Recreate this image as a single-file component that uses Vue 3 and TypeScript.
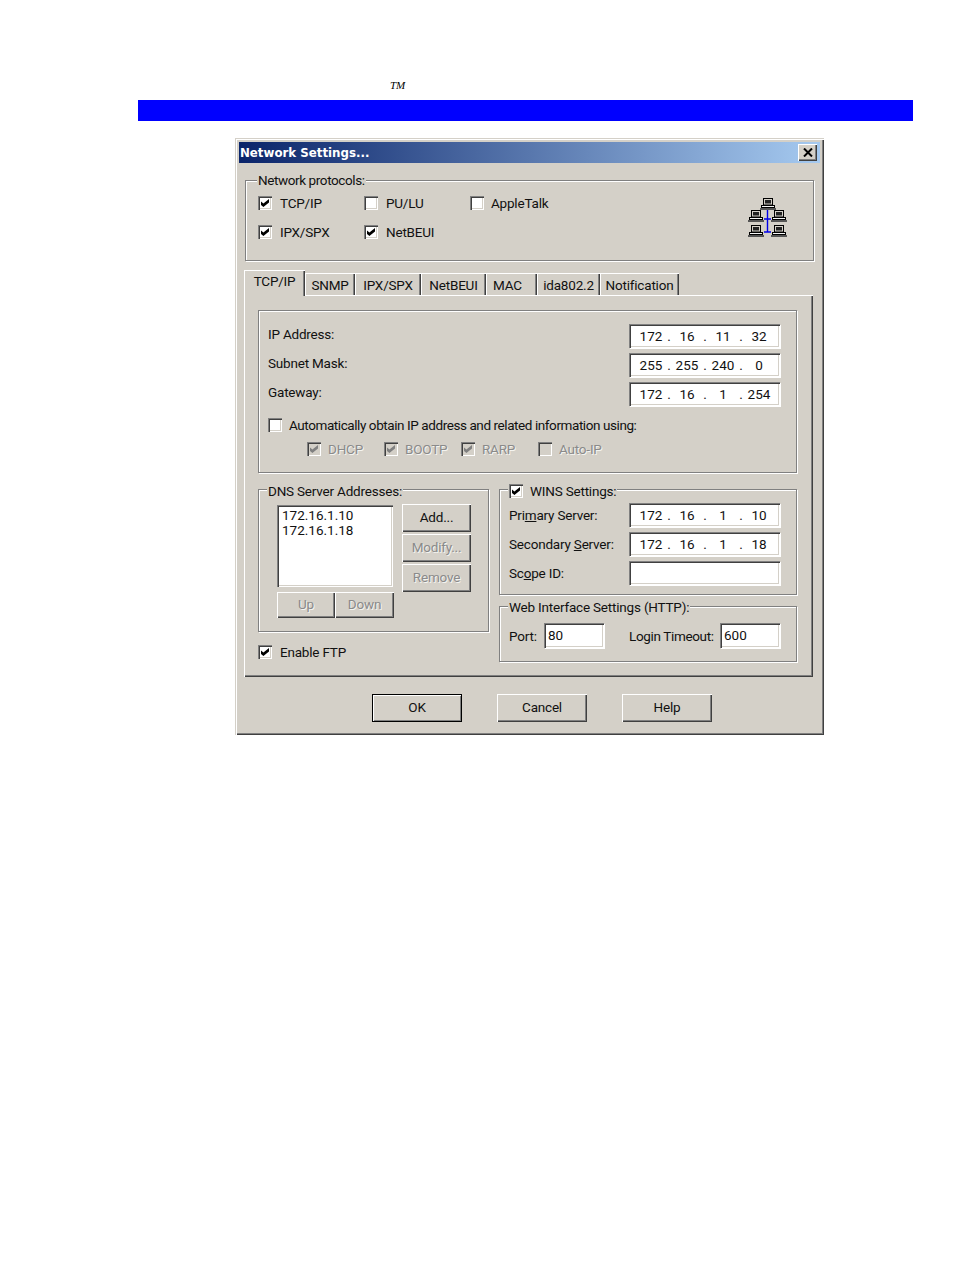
<script setup lang="ts">
const ipRows = [
  { label: 'IP Address:', ip: ['172', '16', '11', '32'] },
  { label: 'Subnet Mask:', ip: ['255', '255', '240', '0'] },
  { label: 'Gateway:', ip: ['172', '16', '1', '254'] },
]
const tabs = [
  { t: 'SNMP', w: 50, pad: 0 },
  { t: 'IPX/SPX', w: 66, pad: 0 },
  { t: 'NetBEUI', w: 65, pad: 0 },
  { t: 'MAC', w: 51, pad: 8 },
  { t: 'ida802.2', w: 63, pad: 0 },
  { t: 'Notification', w: 79, pad: 0 },
]
const sub = [
  { t: 'DHCP', on: true },
  { t: 'BOOTP', on: true },
  { t: 'RARP', on: true },
  { t: 'Auto-IP', on: false },
]
const pcs = [
  [12, 0],
  [0, 12],
  [23, 12],
  [0, 27],
  [23, 27],
]
</script>

<template>
  <div class="page">
    <div class="tm">TM</div>
    <div class="bar"></div>
    <div class="dialog">
      <div class="title">
        <span class="title-text">Network Settings...</span>
        <span class="close">
          <svg width="10" height="9" viewBox="0 0 10 9"><path d="M1 0.5 L9 8.5 M9 0.5 L1 8.5" stroke="#000" stroke-width="2" fill="none" /></svg>
        </span>
      </div>

      <div class="group protocols">
        <span class="legend net-legend">Network protocols:</span>
        <div class="proto-grid">
          <label class="check"><span class="cb on"></span>TCP/IP</label>
          <label class="check"><span class="cb"></span>PU/LU</label>
          <label class="check tight"><span class="cb"></span>AppleTalk</label>
          <label class="check"><span class="cb on"></span>IPX/SPX</label>
          <label class="check"><span class="cb on"></span>NetBEUI</label>
        </div>
        <svg class="net" width="40" height="40" viewBox="0 0 40 40">
          <defs>
            <g id="pc">
              <rect x="3.5" y="0.5" width="9" height="6.5" fill="#d4d0c8" stroke="#000" />
              <rect x="5" y="2" width="6" height="3.5" fill="#222" />
              <rect x="1.5" y="7.5" width="13" height="2" fill="#f4f4f4" stroke="#000" />
              <rect x="0" y="10" width="16" height="2" fill="#555" />
            </g>
          </defs>
          <path d="M19.5 11 V34 M16 21 H23 M16 34 H23" stroke="#0000e8" stroke-width="1.4" fill="none" />
          <use v-for="(p, i) in pcs" :key="i" href="#pc" :x="p[0]" :y="p[1]" />
        </svg>
      </div>

      <div class="tabs">
        <div class="tab active">TCP/IP</div>
        <div v-for="t in tabs" :key="t.t" class="tab" :style="{ width: t.w + 'px', paddingRight: t.pad + 'px' }">{{ t.t }}</div>
      </div>

      <div class="panel">
        <div class="group ipgroup">
          <div class="rows">
            <div v-for="r in ipRows" :key="r.label" class="row">
              <span class="row-label">{{ r.label }}</span>
              <div class="field ipfield">
                <template v-for="(o, i) in r.ip" :key="i">
                  <span class="octet">{{ o }}</span>
                  <span v-if="i < 3" class="dot">.</span>
                </template>
              </div>
            </div>
          </div>
          <label class="check auto"><span class="cb"></span>Automatically obtain IP address and related information using:</label>
          <div class="subrow">
            <label v-for="s in sub" :key="s.t" class="check disabled">
              <span class="cb dis" :class="{ on: s.on }"></span>{{ s.t }}
            </label>
          </div>
        </div>

        <div class="lower">
          <div class="left-col">
            <div class="group dns">
              <span class="legend dns-legend">DNS Server Addresses:</span>
              <div class="dns-main">
                <div class="list-col">
                  <div class="listbox">
                    <div>172.16.1.10</div>
                    <div>172.16.1.18</div>
                  </div>
                  <div class="updown">
                    <span class="btn dim">Up</span>
                    <span class="btn dim">Down</span>
                  </div>
                </div>
                <div class="dns-btns">
                  <span class="btn">Add...</span>
                  <span class="btn dim">Modify...</span>
                  <span class="btn dim">Remove</span>
                </div>
              </div>
            </div>
            <label class="check ftp"><span class="cb on"></span>Enable FTP</label>
          </div>

          <div class="right-col">
            <div class="group wins">
              <label class="check legend wins-legend"><span class="cb on"></span>WINS Settings:</label>
              <div class="rows">
                <div class="row">
                  <span class="row-label">Pri<u>m</u>ary Server:</span>
                  <div class="field ipfield">
                    <span class="octet">172</span><span class="dot">.</span><span class="octet">16</span><span class="dot">.</span><span class="octet">1</span><span class="dot">.</span><span class="octet">10</span>
                  </div>
                </div>
                <div class="row">
                  <span class="row-label">Secondary <u>S</u>erver:</span>
                  <div class="field ipfield">
                    <span class="octet">172</span><span class="dot">.</span><span class="octet">16</span><span class="dot">.</span><span class="octet">1</span><span class="dot">.</span><span class="octet">18</span>
                  </div>
                </div>
                <div class="row">
                  <span class="row-label">Sc<u>o</u>pe ID:</span>
                  <div class="field ipfield"></div>
                </div>
              </div>
            </div>
            <div class="group web">
              <span class="legend web-legend">Web Interface Settings (HTTP):</span>
              <div class="web-row">
                <span class="port-label">Port:</span>
                <div class="field small">80</div>
                <span class="login-label">Login Timeout:</span>
                <div class="field small">600</div>
              </div>
            </div>
          </div>
        </div>
      </div>

      <div class="actions">
        <span class="btn action default">OK</span>
        <span class="btn action">Cancel</span>
        <span class="btn action">Help</span>
      </div>
    </div>
  </div>
</template>

<style>
html, body { margin: 0; background: #fff; }
</style>

<style scoped>
.page {
  height: 1272px;
  overflow: hidden;
  font-family: Roboto, "Liberation Sans", Arial, sans-serif;
  font-size: 13.5px;
  letter-spacing: -0.2px;
  color: #111;
}
.tm {
  padding: 80px 0 0 390px;
  height: 11px;
  font: italic 11px/11px "Liberation Serif", serif;
  color: #000;
}
.bar {
  margin: 9px 0 0 138px;
  width: 775px;
  height: 21px;
  background: #0000ff;
}
.dialog {
  box-sizing: border-box;
  margin: 17px 0 0 235px;
  width: 589px;
  height: 597px;
  padding: 4px;
  background: #d4d0c8;
  box-shadow: inset 1px 1px 0 #d4d0c8, inset 2px 2px 0 #fff, inset -1px -1px 0 #404040, inset -2px -2px 0 #808080;
}
.title {
  height: 21px;
  display: flex;
  align-items: center;
  justify-content: space-between;
  padding: 0 3px 0 1px;
  background: linear-gradient(90deg, #0a246a, #a6caf0);
}
.title-text {
  font: bold 11.8px "DejaVu Sans", sans-serif;
  letter-spacing: 0;
  color: #fff;
}
.close {
  box-sizing: border-box;
  width: 19px;
  height: 17px;
  display: flex;
  align-items: center;
  justify-content: center;
  background: #d4d0c8;
  box-shadow: inset 1px 1px 0 #fff, inset -1px -1px 0 #404040, inset -2px -2px 0 #808080;
}
.group {
  position: relative;
  box-sizing: border-box;
  border: 1px solid #808080;
  box-shadow: 1px 1px 0 #fff, inset 1px 1px 0 #fff;
}
.legend {
  position: absolute;
  top: -8px;
  line-height: 16px;
  padding: 0 1px;
  background: #d4d0c8;
  white-space: nowrap;
}
.protocols {
  margin: 17px 6px 0;
  height: 81px;
  padding: 15px 0 0 12px;
  display: flex;
  justify-content: space-between;
}
.net-legend { left: 11px; top: -9px; letter-spacing: -0.4px; }
.proto-grid {
  display: grid;
  grid-template-columns: 106px 106px 106px;
  grid-auto-rows: 29px;
  align-self: flex-start;
}
.net { margin: 2px 25px 0 0; flex: none; }
.check {
  display: flex;
  align-items: center;
  gap: 8px;
  height: 14px;
  white-space: nowrap;
}
.tight { gap: 7px; }
.cb {
  position: relative;
  flex: none;
  box-sizing: border-box;
  width: 14px;
  height: 14px;
  background: #fff;
  box-shadow: inset 1px 1px 0 #808080, inset 2px 2px 0 #404040, inset -1px -1px 0 #fff, inset -2px -2px 0 #d4d0c8;
}
.cb.on::after {
  content: "";
  position: absolute;
  left: 3px;
  top: 3px;
  width: 8px;
  height: 8px;
  background: #000;
  clip-path: polygon(0 30%, 30% 55%, 100% 0, 100% 45%, 30% 100%, 0 75%);
}
.cb.dis { background: #d4d0c8; }
.cb.dis.on::after { background: #808080; }
.disabled { color: #8a8a8a; text-shadow: 1px 1px 0 #f4f4f0; gap: 7px; }
.tabs {
  margin: 9px 0 0 5px;
  height: 25px;
  display: flex;
  align-items: flex-end;
  position: relative;
  z-index: 1;
}
.tab {
  box-sizing: border-box;
  height: 22px;
  padding-top: 3px;
  line-height: 18px;
  text-align: center;
  white-space: nowrap;
  box-shadow: inset 1px 1px 0 #fff, inset -1px 0 0 #404040, inset -2px 0 0 #808080;
}
.tab.active {
  width: 61px;
  height: 26px;
  margin-bottom: -1px;
  padding-top: 2px;
  background: #d4d0c8;
}
.panel {
  box-sizing: border-box;
  margin-left: 5px;
  width: 569px;
  height: 382px;
  padding: 15px 0 0 14px;
  box-shadow: inset 1px 1px 0 #fff, inset -1px -1px 0 #404040, inset -2px -2px 0 #808080;
}
.ipgroup {
  width: 539px;
  height: 163px;
  padding: 13px 16px 0 9px;
}
.rows {
  display: flex;
  flex-direction: column;
  gap: 5px;
}
.row {
  display: flex;
  align-items: center;
  justify-content: space-between;
  height: 24px;
}
.row-label {
  padding-bottom: 4px;
  white-space: nowrap;
}
.wins .row-label { padding-bottom: 1px; }
.row-label u { text-underline-offset: 1px; }
.field {
  box-sizing: border-box;
  background: #fff;
  box-shadow: inset 1px 1px 0 #808080, inset 2px 2px 0 #404040, inset -1px -1px 0 #fff, inset -2px -2px 0 #d4d0c8, 1px 1px 0 #fff;
}
.ipfield {
  width: 151px;
  height: 24px;
  display: flex;
  align-items: center;
  padding: 0 0 0 10px;
  letter-spacing: 0;
}
.octet {
  width: 24px;
  text-align: center;
}
.dot {
  width: 12px;
  text-align: center;
}
.auto { margin-top: 12px; gap: 7px; letter-spacing: -0.42px; }
.subrow {
  margin-top: 10px;
  padding-left: 39px;
  display: grid;
  grid-template-columns: repeat(4, 77px);
}
.lower {
  margin-top: 16px;
  display: flex;
  gap: 10px;
}
.left-col { width: 231px; }
.dns { height: 143px; }
.dns-legend { left: 8px; top: -7px; }
.dns-main {
  display: flex;
  gap: 8px;
  padding: 15px 0 0 18px;
}
.list-col {
  width: 117px;
  display: flex;
  flex-direction: column;
  gap: 5px;
}
.listbox {
  box-sizing: border-box;
  width: 116px;
  height: 82px;
  padding: 3px 0 0 5px;
  line-height: 15px;
  letter-spacing: 0;
  background: #fff;
  box-shadow: inset 1px 1px 0 #808080, inset 2px 2px 0 #404040, inset -1px -1px 0 #fff, inset -2px -2px 0 #d4d0c8;
}
.updown {
  display: flex;
  height: 26px;
}
.updown .btn:first-child { width: 58px; }
.updown .btn:last-child { width: 59px; }
.dns-btns {
  width: 69px;
  margin-top: -1px;
  display: flex;
  flex-direction: column;
  gap: 2px;
}
.dns-btns .btn { height: 28px; }
.btn {
  box-sizing: border-box;
  display: flex;
  align-items: center;
  justify-content: center;
  padding-bottom: 2px;
  background: #d4d0c8;
  box-shadow: inset 1px 1px 0 #fff, inset -1px -1px 0 #404040, inset -2px -2px 0 #808080;
}
.btn.dim { color: #8a8a8a; text-shadow: 1px 1px 0 #f4f4f0; }
.ftp { margin-top: 13px; }
.right-col {
  width: 298px;
  display: flex;
  flex-direction: column;
  gap: 11px;
}
.wins {
  height: 106px;
  padding: 13px 16px 0 9px;
}
.wins-legend {
  left: 8px;
  top: -7px;
  height: 16px;
  gap: 7px;
}
.web {
  height: 56px;
  padding: 16px 0 0 9px;
}
.web-legend { left: 8px; top: -8px; }
.web-row {
  display: flex;
  align-items: center;
}
.port-label { width: 35px; }
.login-label { width: 91px; margin-left: 25px; letter-spacing: -0.35px; }
.small {
  width: 60px;
  height: 25px;
  line-height: 24px;
  padding-left: 4px;
  letter-spacing: 0;
}
.actions {
  margin: 17px 0 0 133px;
  display: flex;
  gap: 35px;
}
.action {
  width: 90px;
  height: 28px;
}
.default {
  box-shadow: inset 0 0 0 1px #000, inset 2px 2px 0 #fff, inset -2px -2px 0 #808080;
}
</style>
